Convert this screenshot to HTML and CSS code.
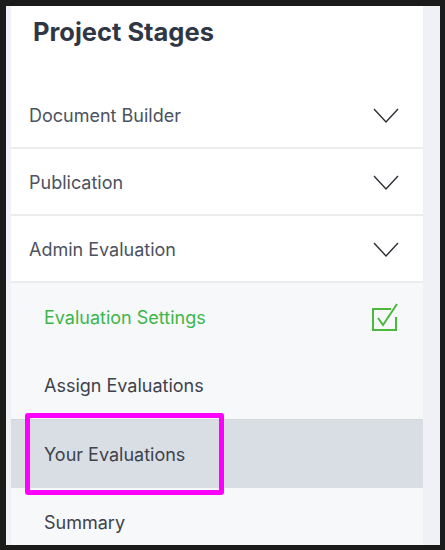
FILE: index.html
```html
<!DOCTYPE html>
<html lang="en">
<head>
    <meta charset="UTF-8">
    <meta name="viewport" content="width=device-width, initial-scale=1.0">
    <title>Project Stages</title>
    <link rel="stylesheet" href="styles.css">
</head>
<body>
    <div class="screen">
        <div class="panel">
            <h1 class="title">Project Stages</h1>

            <!-- Stages -->
            <div class="stage">
                <span>Document Builder</span>
                <svg class="chevron" viewBox="0 0 26 16"><path d="M1 1 L13 14 L25 1" /></svg>
            </div>
            <div class="stage">
                <span>Publication</span>
                <svg class="chevron" viewBox="0 0 26 16"><path d="M1 1 L13 14 L25 1" /></svg>
            </div>
            <div class="stage">
                <span>Admin Evaluation</span>
                <svg class="chevron" viewBox="0 0 26 16"><path d="M1 1 L13 14 L25 1" /></svg>
            </div>

            <!-- Admin Evaluation sub steps -->
            <div class="substeps">
                <div class="substep done">
                    <span>Evaluation Settings</span>
                    <svg class="check" viewBox="0 0 28 30">
                        <path class="box" d="M20 7 H2 V28 H25 V15" />
                        <path d="M7 16 L12 23 L26 2" />
                    </svg>
                </div>
                <div class="substep">
                    <span>Assign Evaluations</span>
                </div>
                <div class="substep active">
                    <span>Your Evaluations</span>
                </div>
                <div class="substep">
                    <span>Summary</span>
                </div>
            </div>

            <div class="highlight"></div>
        </div>
    </div>
</body>
</html>
```

FILE: styles.css
```css
 body {
     margin: 0;
     padding: 6px 5px 5px 6px;
     background-color: #1b1b1b;
     font-family: Inter, "Liberation Sans", Arial, sans-serif;
     height: 550px;
     box-sizing: border-box;
 }
.screen {
     height: 100%;
     background-color: #eff1f6;
     padding: 0 17px 0 5px;
     overflow: hidden;
 }
.panel {
     position: relative;
     height: 100%;
     background-color: #fff;
 }
.title {
     margin: 0;
     height: 76px;
     padding: 10px 0 0 22px;
     box-sizing: border-box;
     font-size: 25.5px;
     font-weight: 700;
     color: #2f3746;
 }
.stage {
     display: flex;
     align-items: center;
     justify-content: space-between;
     height: 67px;
     padding: 2px 24px 0 18px;
     border-bottom: 2px solid #ececef;
     box-sizing: border-box;
     font-size: 18px;
     color: #4b5260;
 }
.chevron {
     width: 26px;
     height: 16px;
     fill: none;
     stroke: #2c2f36;
     stroke-width: 1.4;
 }
.substeps {
     background-color: #f7f8fa;
 }
.substep {
     display: flex;
     align-items: center;
     justify-content: space-between;
     height: 68px;
     padding: 0 24px 0 33px;
     font-size: 18px;
     color: #3d424c;
 }
.substep.done {
     color: #3cb64a;
 }
.substep.active {
     background-color: #d9dee5;
     border-top: 1px solid #d2d7de;
 }
.check {
     width: 28px;
     height: 30px;
     fill: none;
     stroke: #4cb83c;
     stroke-width: 2;
 }
.highlight {
     position: absolute;
     left: 14px;
     top: 407px;
     width: 199px;
     height: 82px;
     border: 5px solid #ff00ff;
     border-radius: 3px;
     box-sizing: border-box;
 }
```
